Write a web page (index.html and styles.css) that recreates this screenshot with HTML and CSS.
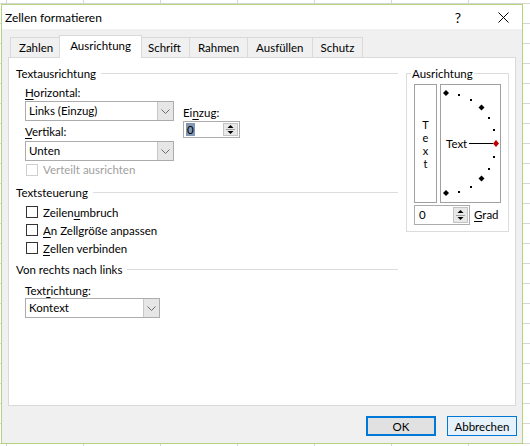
FILE: index.html
```html
<!DOCTYPE html>
<html lang="de">
<head>
    <meta charset="UTF-8">
    <title>Zellen formatieren</title>
    <link rel="stylesheet" href="styles.css">
</head>
<body>
    <div class="window">
        <div class="titlebar">
            <span class="title">Zellen formatieren</span>
            <span class="help">?</span>
            <span class="close">
                <svg width="11" height="11" viewBox="0 0 11 11"><path d="M0.5 0.5 L10.5 10.5 M10.5 0.5 L0.5 10.5" stroke="#000" stroke-width="1"/></svg>
            </span>
        </div>

        <div class="body">
            <div class="tabs">
                <div class="tab">Zahlen</div>
                <div class="tab active">Ausrichtung</div>
                <div class="tab">Schrift</div>
                <div class="tab">Rahmen</div>
                <div class="tab">Ausfüllen</div>
                <div class="tab">Schutz</div>
            </div>

            <div class="panel">
                <div class="left">
                    <div class="group">Textausrichtung</div>

                    <div class="align-row">
                        <div class="align-col">
                            <div class="label"><u>H</u>orizontal:</div>
                            <div class="select wide">
                                <span class="value">Links (Einzug)</span>
                                <span class="drop"><svg width="9" height="5" viewBox="0 0 9 5"><path d="M0.5 0.5 L4.5 4.5 L8.5 0.5" fill="none" stroke="#6b6b6b"/></svg></span>
                            </div>
                            <div class="label gap-v"><u>V</u>ertikal:</div>
                            <div class="select wide second">
                                <span class="value">Unten</span>
                                <span class="drop"><svg width="9" height="5" viewBox="0 0 9 5"><path d="M0.5 0.5 L4.5 4.5 L8.5 0.5" fill="none" stroke="#6b6b6b"/></svg></span>
                            </div>
                        </div>
                        <div class="indent-col">
                            <div class="label">Ei<u>n</u>zug:</div>
                            <div class="spin indent">
                                <span class="spin-val"><span class="selected">0</span></span>
                                <span class="spin-btn"><svg width="11" height="13" viewBox="0 0 11 13"><path d="M5.5 2 L8.5 5 L2.5 5 Z" fill="#000"/><path d="M1 6.5 H10" stroke="#a0a0a0"/><path d="M2.5 8 L8.5 8 L5.5 11 Z" fill="#000"/></svg></span>
                            </div>
                        </div>
                    </div>

                    <div class="check disabled"><span class="box"></span>Verteilt ausrichten</div>

                    <div class="group gap-group">Textsteuerung</div>
                    <div class="checks">
                        <div class="check"><span class="box"></span>Zeilen<u>u</u>mbruch</div>
                        <div class="check"><span class="box"></span><u>A</u>n Zellgröße anpassen</div>
                        <div class="check"><span class="box"></span><u>Z</u>ellen verbinden</div>
                    </div>

                    <div class="group gap-rtl">Von rechts nach links</div>
                    <div class="label gap-dir">Text<u>r</u>ichtung:</div>
                    <div class="select narrow">
                        <span class="value">Kontext</span>
                        <span class="drop"><svg width="9" height="5" viewBox="0 0 9 5"><path d="M0.5 0.5 L4.5 4.5 L8.5 0.5" fill="none" stroke="#6b6b6b"/></svg></span>
                    </div>
                </div>

                <fieldset class="orient">
                    <legend>Ausrichtung</legend>
                    <div class="orient-boxes">
                        <div class="vtext">
                            <span>T</span><span>e</span><span>x</span><span>t</span>
                        </div>
                        <div class="dial">
                            <svg width="59" height="117" viewBox="0 0 59 117">
                                <path d="M5 5 L8 8 L5 11 L2 8 Z" fill="#000"/>
                                <rect x="17" y="9" width="2" height="2" fill="#000"/>
                                <rect x="29" y="14" width="2" height="2" fill="#000"/>
                                <path d="M40.5 19.5 L43.5 22.5 L40.5 25.5 L37.5 22.5 Z" fill="#000"/>
                                <rect x="47" y="32" width="2" height="2" fill="#000"/>
                                <rect x="52" y="44" width="2" height="2" fill="#000"/>
                                <path d="M28 58.5 H52" stroke="#000" stroke-width="1"/>
                                <path d="M55 55 L58 58.5 L55 62 L52 58.5 Z" fill="#c00000"/>
                                <rect x="52" y="71" width="2" height="2" fill="#000"/>
                                <rect x="47" y="83" width="2" height="2" fill="#000"/>
                                <path d="M40.5 90.5 L43.5 93.5 L40.5 96.5 L37.5 93.5 Z" fill="#000"/>
                                <rect x="29" y="101" width="2" height="2" fill="#000"/>
                                <rect x="17" y="106" width="2" height="2" fill="#000"/>
                                <path d="M5 105 L8 108 L5 111 L2 108 Z" fill="#000"/>
                                <text x="5" y="63" class="dial-text">Text</text>
                            </svg>
                        </div>
                    </div>
                    <div class="degree">
                        <div class="spin grad">
                            <span class="spin-val">0</span>
                            <span class="spin-btn"><svg width="11" height="16" viewBox="0 0 11 16"><path d="M5.5 3 L8.5 6 L2.5 6 Z" fill="#000"/><path d="M1 8.5 H10" stroke="#a0a0a0"/><path d="M2.5 10 L8.5 10 L5.5 13 Z" fill="#000"/></svg></span>
                        </div>
                        <span class="grad-label"><u>G</u>rad</span>
                    </div>
                </fieldset>
            </div>

            <div class="buttons">
                <button class="btn default">OK</button>
                <button class="btn hover">Abbrechen</button>
            </div>
        </div>
    </div>
</body>
</html>
```

FILE: styles.css
```css
* {
    box-sizing: border-box;
}

body {
    margin: 0;
    height: 446px;
    overflow: hidden;
    font-family: Lato, "Noto Sans", sans-serif;
    font-size: 11.5px;
    color: #000;
    background-color: #fff;
    background-image:
        linear-gradient(90deg, #d6d6d6 1px, transparent 1px),
        linear-gradient(#d6d6d6 1px, transparent 1px);
    background-size: 77px 100%, 100% 20px;
    background-position: 6px 0, 0 3px;
}

u {
    text-decoration-thickness: 1px;
    text-underline-offset: 2px;
}

.window {
    width: 522px;
    height: 440px;
    margin: 4px 0 0 1px;
    border: 1px solid #b3d47c;
    background: #f0f0f0;
    display: flex;
    flex-direction: column;
}

.titlebar {
    height: 24px;
    background: #fff;
    display: flex;
    align-items: center;
    padding-left: 3px;
    font-size: 12px;
}

.title {
    flex: 1;
}

.help {
    width: 36px;
    text-align: center;
    font-size: 14px;
    margin-right: 8px;
}

.close {
    width: 38px;
    display: flex;
    justify-content: center;
}

.body {
    flex: 1;
    display: flex;
    flex-direction: column;
}

/* tabs */
.tabs {
    height: 28px;
    display: flex;
    align-items: flex-end;
    padding-left: 8px;
}

.tab {
    height: 20px;
    line-height: 19px;
    padding: 0 8px;
    border: 1px solid #d9d9d9;
    border-bottom: none;
    margin-left: -1px;
    background: #f0f0f0;
}

.tab:first-child {
    margin-left: 0;
}

.tab.active {
    position: relative;
    z-index: 1;
    height: 23px;
    line-height: 20px;
    margin: 0 -2px -1px -3px;
    padding: 0 10px;
    background: #fff;
}

.panel {
    height: 349px;
    margin: 0 6px;
    border: 1px solid #d9d9d9;
    background: #fff;
    display: flex;
    gap: 8px;
    padding: 8px 6px 0 7px;
    align-items: flex-start;
}

.left {
    width: 382px;
    display: flex;
    flex-direction: column;
}

.group {
    display: flex;
    align-items: center;
    gap: 5px;
    height: 15px;
    line-height: 15px;
}

.group::after {
    content: "";
    flex: 1;
    border-top: 1px solid #dcdcdc;
}

.label {
    height: 15px;
    line-height: 15px;
    padding-left: 9px;
}

.align-row {
    display: flex;
    margin-top: 4px;
}

.align-col {
    display: flex;
    flex-direction: column;
}

.gap-v {
    margin-top: 3px;
}

.indent-col {
    padding: 20px 0 0 9px;
}

.indent-col .label {
    padding-left: 0;
}

.select {
    height: 20px;
    margin-top: 1px;
    margin-left: 9px;
    border: 1px solid #acacac;
    display: flex;
    background: #fff;
}

.select.second {
    margin-top: 2px;
}

.select.wide {
    width: 149px;
}

.select.narrow {
    width: 135px;
    margin-top: 0;
}

.select .value {
    flex: 1;
    padding-left: 3px;
    line-height: 18px;
}

.drop {
    width: 16px;
    border-left: 1px solid #c8c8c8;
    background: #e6e6e6;
    display: flex;
    align-items: center;
    justify-content: center;
}

/* spin boxes */
.spin {
    height: 17px;
    border: 1px solid #acacac;
    display: flex;
    background: #fff;
    margin-top: 1px;
}

.spin.indent {
    width: 57px;
}

.spin.grad {
    width: 56px;
    height: 20px;
}

.spin-val {
    flex: 1;
    padding-left: 2px;
    line-height: 15px;
}

.spin.grad .spin-val {
    padding-left: 4px;
    line-height: 18px;
}

.selected {
    background: #8197b3;
    padding: 0 1px;
}

.spin-btn {
    width: 15px;
    margin: 1px 1px 1px 0;
    background: #e8e8e8;
    border: 1px solid #c4c4c4;
    display: flex;
    align-items: center;
    justify-content: center;
}

/* checkboxes */
.check {
    display: flex;
    align-items: center;
    height: 18px;
    padding-left: 10px;
}

.check .box {
    width: 12px;
    height: 12px;
    border: 1px solid #333;
    background: #fff;
    margin-right: 5px;
}

.check.disabled {
    color: #a0a0a0;
    margin-top: 1px;
    height: 15px;
}

.check.disabled .box {
    border-color: #cfcfcf;
}

.gap-group {
    margin-top: 8px;
}

.checks {
    margin-top: 3px;
}

.gap-rtl {
    margin-top: 5px;
}

.gap-dir {
    margin-top: 6px;
}

/* orientation box */
.orient {
    width: 103px;
    margin: 0;
    padding: 3px 7px 6px 7px;
    border: 1px solid #dcdcdc;
}

.orient legend {
    padding: 0 1px;
    margin-left: -3px;
    line-height: 15px;
}

.orient-boxes {
    display: flex;
    gap: 3px;
}

.vtext {
    width: 23px;
    height: 119px;
    border: 1px solid #a0a0a0;
    display: flex;
    flex-direction: column;
    align-items: center;
    justify-content: center;
    font-size: 11px;
    line-height: 13px;
}

.dial {
    width: 61px;
    height: 119px;
    border: 1px solid #a0a0a0;
}

.dial svg {
    display: block;
}

.dial-text {
    font-family: Lato, "Noto Sans", sans-serif;
    font-size: 11.5px;
}

.degree {
    display: flex;
    align-items: center;
    margin-top: 1px;
}

.grad-label {
    margin-left: 4px;
}

/* bottom buttons */
.buttons {
    display: flex;
    justify-content: flex-end;
    gap: 11px;
    padding: 10px 5px 0 0;
}

.btn {
    width: 70px;
    height: 20px;
    font-family: Lato, "Noto Sans", sans-serif;
    font-size: 11.5px;
    color: #000;
    padding: 0;
}

.btn.default {
    background: #e1e1e1;
    border: 2px solid #0078d7;
}

.btn.hover {
    background: #e5f1fb;
    border: 1px solid #0078d7;
}
```
